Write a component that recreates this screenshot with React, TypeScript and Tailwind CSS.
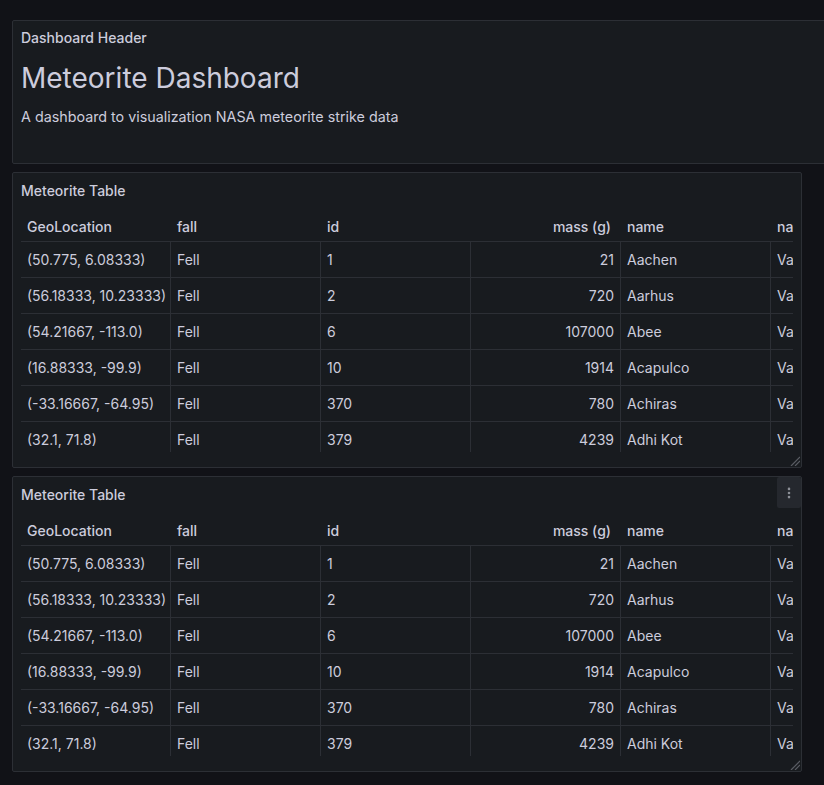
import { EllipsisVertical } from "lucide-react";

type Meteorite = {
  geo: string;
  fall: string;
  id: number;
  mass: number;
  name: string;
  nametype: string;
};

const rows: Meteorite[] = [
  { geo: "(50.775, 6.08333)", fall: "Fell", id: 1, mass: 21, name: "Aachen", nametype: "Valid" },
  { geo: "(56.18333, 10.23333)", fall: "Fell", id: 2, mass: 720, name: "Aarhus", nametype: "Valid" },
  { geo: "(54.21667, -113.0)", fall: "Fell", id: 6, mass: 107000, name: "Abee", nametype: "Valid" },
  { geo: "(16.88333, -99.9)", fall: "Fell", id: 10, mass: 1914, name: "Acapulco", nametype: "Valid" },
  { geo: "(-33.16667, -64.95)", fall: "Fell", id: 370, mass: 780, name: "Achiras", nametype: "Valid" },
  { geo: "(32.1, 71.8)", fall: "Fell", id: 379, mass: 4239, name: "Adhi Kot", nametype: "Valid" },
  { geo: "(32.1, 71.8)", fall: "Fell", id: 390, mass: 910, name: "Adzhi-Bogdo", nametype: "Valid" },
];

// resize grip in the panel's bottom-right corner
function ResizeHandle() {
  return (
    <svg
      className="absolute right-[1px] bottom-[1px]"
      width="10"
      height="10"
      viewBox="0 0 10 10"
      fill="none"
    >
      <path d="M1 10L10 1" stroke="#5a5d64" strokeWidth="1.2" />
      <path d="M5 10L10 5" stroke="#5a5d64" strokeWidth="1.2" />
    </svg>
  );
}

function Panel({ title, children, menu }: { title: string; children: React.ReactNode; menu?: boolean }) {
  return (
    <div className="relative w-[790px] h-[296px] bg-[#181b1f] border border-[#2c2f35] rounded-[2px] flex flex-col">
      <div className="h-8 pt-[3px] flex items-center px-2 text-sm font-medium text-[#ccccdc] shrink-0">{title}</div>
      {menu && (
        <div className="absolute right-0 top-0 w-6 h-[31px] rounded-[2px] bg-[#25282e] flex items-center justify-center text-[#8e9199]">
          <EllipsisVertical className="w-3.5 h-3.5" strokeWidth={2.5} />
        </div>
      )}
      <div className="flex-1 px-2 pt-2 pb-[14px] min-h-0">{children}</div>
      <ResizeHandle />
    </div>
  );
}

function MeteoriteTable() {
  return (
    <div className="h-[239px] overflow-hidden text-sm text-[#ccccdc]">
      <div className="w-[900px]">
        <div className="flex h-[29px] items-center font-medium border-b border-[#2c2f35]">
          <div className="w-[150px] px-1.5">GeoLocation</div>
          <div className="w-[150px] px-1.5">fall</div>
          <div className="w-[150px] px-1.5">id</div>
          <div className="w-[150px] pl-1.5 pr-2.5 text-right">mass (g)</div>
          <div className="w-[150px] px-1.5">name</div>
          <div className="w-[150px] px-1.5">nametype</div>
        </div>
        {rows.map((r, i) => (
          <div key={i} className="flex h-9 border-b border-[#2c2f35]">
            <div className="w-[150px] px-1.5 flex items-center border-r border-[#2c2f35] whitespace-nowrap">{r.geo}</div>
            <div className="w-[150px] px-1.5 flex items-center border-r border-[#2c2f35]">{r.fall}</div>
            <div className="w-[150px] px-1.5 flex items-center border-r border-[#2c2f35]">{r.id}</div>
            <div className="w-[150px] px-1.5 flex items-center justify-end border-r border-[#2c2f35]">{r.mass}</div>
            <div className="w-[150px] px-1.5 flex items-center border-r border-[#2c2f35]">{r.name}</div>
            <div className="w-[150px] px-1.5 flex items-center border-r border-[#2c2f35]">{r.nametype}</div>
          </div>
        ))}
      </div>
    </div>
  );
}

export default function App() {
  return (
    <div
      className="w-[824px] h-[785px] overflow-hidden bg-[#111217] pt-5 pl-3"
      style={{ fontFamily: "Inter, 'Noto Sans', sans-serif" }}
    >
      <div className="flex flex-col gap-2">
        {/* Header */}
        <div className="w-[900px] h-[144px] bg-[#181b1f] border border-[#2c2f35] rounded-[2px]">
          <div className="h-8 pt-[2px] flex items-center px-2 text-sm font-medium text-[#ccccdc]">Dashboard Header</div>
          <div className="px-2 pt-2 text-[#ccccdc]">
            <h1 className="text-[28px] leading-[34px] font-normal mb-3">Meteorite Dashboard</h1>
            <p className="text-[14.3px] leading-[20px]">A dashboard to visualization NASA meteorite strike data</p>
          </div>
        </div>

        <Panel title="Meteorite Table">
          <MeteoriteTable />
        </Panel>

        <Panel title="Meteorite Table" menu>
          <MeteoriteTable />
        </Panel>
      </div>
    </div>
  );
}
